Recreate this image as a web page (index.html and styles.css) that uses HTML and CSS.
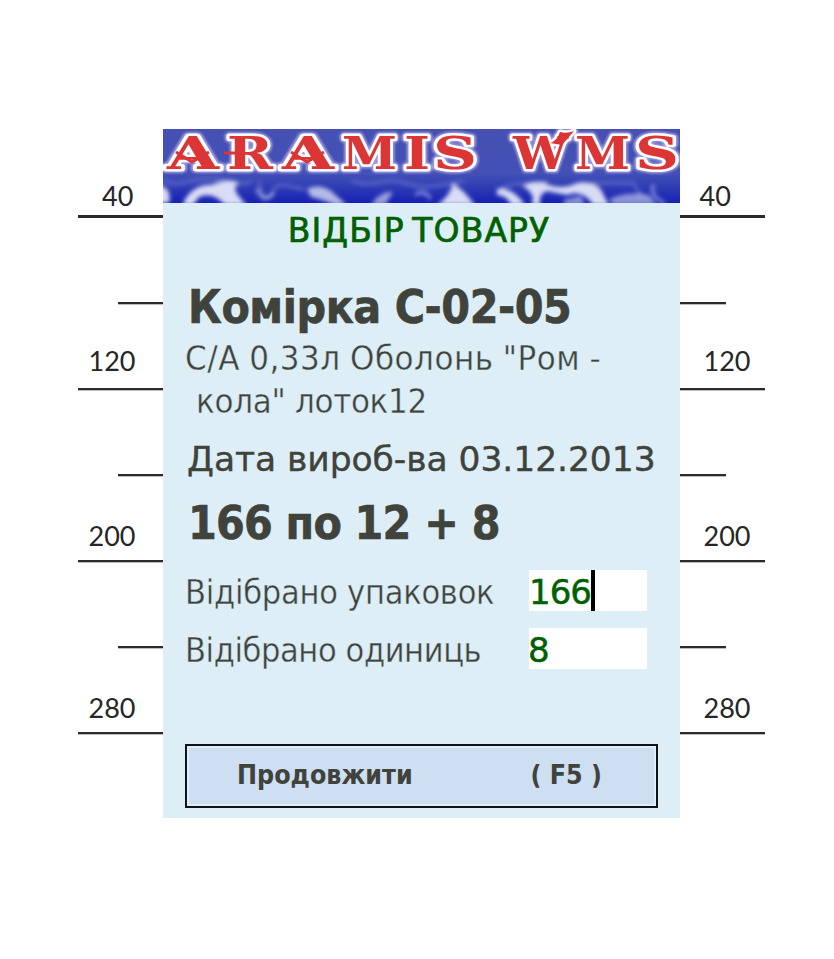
FILE: index.html
```html
<!DOCTYPE html>
<html lang="uk">
<head>
<meta charset="utf-8">
<title>ARAMIS WMS</title>
<link rel="stylesheet" href="styles.css">
</head>
<body>
<main class="stage">
  <div class="axis axis-left">
    <div class="tick major first"><span>40</span></div>
    <div class="tick minor"></div>
    <div class="tick major second"><span>120</span></div>
    <div class="tick minor"></div>
    <div class="tick major"><span>200</span></div>
    <div class="tick minor"></div>
    <div class="tick major"><span>280</span></div>
  </div>

  <section class="screen">
    <svg class="banner" viewBox="0 0 517 74" width="517" height="74">
      <defs>
        <linearGradient id="sky" x1="0" y1="0" x2="0" y2="1">
          <stop offset="0" stop-color="#4650b2"/>
          <stop offset=".6" stop-color="#4350b6"/>
          <stop offset=".8" stop-color="#2c3ab4"/>
          <stop offset="1" stop-color="#1620b4"/>
        </linearGradient>
        <filter id="soft" x="-10%" y="-50%" width="120%" height="200%"><feGaussianBlur stdDeviation="2.3"/></filter>
        <filter id="glow" x="-5%" y="-20%" width="110%" height="140%"><feGaussianBlur stdDeviation="1.2"/></filter>
        <filter id="fine" x="-5%" y="-20%" width="110%" height="140%"><feGaussianBlur stdDeviation=".6"/></filter>
        <g id="letters">
          <text x="4" y="40" textLength="52" lengthAdjust="spacingAndGlyphs">A</text>
          <text x="64" y="40" textLength="46" lengthAdjust="spacingAndGlyphs">R</text>
          <text x="119" y="40" textLength="52" lengthAdjust="spacingAndGlyphs">A</text>
          <text x="179" y="40" textLength="55" lengthAdjust="spacingAndGlyphs">M</text>
          <text x="241" y="40" textLength="26" lengthAdjust="spacingAndGlyphs">I</text>
          <text x="270" y="40" textLength="44" lengthAdjust="spacingAndGlyphs">S</text>
          <text x="350" y="40" textLength="55" lengthAdjust="spacingAndGlyphs">W</text>
          <text x="412" y="40" textLength="55" lengthAdjust="spacingAndGlyphs">M</text>
          <text x="472" y="40" textLength="44" lengthAdjust="spacingAndGlyphs">S</text>
          <path d="M387 14Q394 12 397 3Q404 5 411 2L399 16Z"/>
        </g>
      </defs>
      <rect width="517" height="74" fill="url(#sky)"/>
      <g filter="url(#soft)" fill="none" stroke="#e0e2f6" stroke-linecap="round">
        <path d="M0 51C15 60 28 48 52 50S80 58 88 52M96 52C99 70 106 72 110 62S124 57 140 60M190 52C210 60 222 47 242 54S280 56 300 52M338 60C352 50 372 58 384 52M430 54H470L478 66" stroke="#5c66c8" stroke-width="3"/>
        <g fill="#d8dcf4" stroke="none">
          <path d="M-5 56Q9 58 6 74H-5Z"/>
          <path d="M20 76C22 66 34 55 48 56Q66 49 76 54C68 59 74 66 84 76H62Q50 62 36 68L30 76Z"/>
          <path d="M144 60Q156 54 168 62L184 76H172Q158 70 148 68Z" opacity=".8"/>
          <path d="M208 76Q216 62 230 63L222 76Z" opacity=".65"/>
          <path d="M274 76Q288 66 290 54L302 64L312 76Z"/>
          <path d="M334 60Q350 58 362 76H348Q344 66 334 66Z"/>
          <path d="M360 57Q374 49 386 56Q400 61 414 54Q430 51 438 61L446 76H430Q420 60 404 66L384 62Q374 66 378 76H368Q374 66 360 57Z"/>
          <path d="M400 71L418 67L422 76H402ZM446 70Q464 62 486 66L494 76H450Z" opacity=".6"/>
        </g>
        <path d="M94 61Q100 76 110 65M253 65Q262 61 267 69M490 57Q487 68 501 74" stroke-width="3" opacity=".55"/>
      </g>
      <use href="#letters" class="halo" filter="url(#glow)"/>
      <use href="#letters" class="edge" filter="url(#fine)"/>
      <use href="#letters" class="ink" filter="url(#fine)"/>
      <g class="notch" filter="url(#fine)">
        <path d="M13 23L29 33L46 23M128 23L144 33L161 23"/>
        <path d="M61 24H76"/>
      </g>
    </svg>

    <h1 class="title">ВІДБІР ТОВАРУ</h1>
    <div class="content">
      <h2 class="cell">Комірка С-02-05</h2>
      <div class="product">
        <div class="product-a">С/А 0,33л Оболонь "Ром -</div>
        <div class="product-b">кола" лоток12</div>
      </div>
      <div class="date">Дата вироб-ва 03.12.2013</div>
      <div class="quantity">166 по 12 + 8</div>
      <div class="field">
        <span class="label packs">Відібрано упаковок</span>
        <span class="value">166<i class="caret"></i></span>
      </div>
      <div class="field">
        <span class="label units">Відібрано одиниць</span>
        <span class="value second-value">8</span>
      </div>
      <button class="next"><span>Продовжити</span><span>( F5 )</span></button>
    </div>
  </section>

  <div class="axis axis-right">
    <div class="tick major first"><span>40</span></div>
    <div class="tick minor"></div>
    <div class="tick major second"><span>120</span></div>
    <div class="tick minor"></div>
    <div class="tick major"><span>200</span></div>
    <div class="tick minor"></div>
    <div class="tick major"><span>280</span></div>
  </div>
</main>
</body>
</html>
```
FILE: styles.css
```css
* { box-sizing: border-box; }
body { margin: 0; background: #fff; color: #40423c; }
h1, h2 { margin: 0; }
.stage { display: grid; grid-template-columns: 85px 517px 85px; padding: 129px 0 0 78px; height: 959px; align-items: start; }

.axis { display: flex; flex-direction: column; padding-top: 2px; }
.tick { height: 86px; display: flex; align-items: flex-end; border-bottom: 2px solid #2b2b2b; box-shadow: 0 1px #bbb; }
.tick span { font: 27px/30px Lato, sans-serif; color: #262626; margin-bottom: 9px; }
.tick.first { border-bottom-width: 3px; height: 87px; box-shadow: none; }
.tick.first span { margin-bottom: 4px; }
.tick.second span { margin-bottom: 12px; }
.axis-left .minor { width: 45px; align-self: flex-end; }
.axis-right .minor { width: 46px; }
.axis-left span { margin-left: 10.5px; }
.axis-left .first span { margin-left: 24px; }
.axis-right span { margin-left: 23.5px; }
.axis-right .first span { margin-left: 19.5px; }

.screen { height: 689px; background: #ddeef6; font-family: "DejaVu Sans Condensed", "DejaVu Sans", sans-serif; font-stretch: condensed; white-space: nowrap; }
.banner { display: block; font: bold 44px "DejaVu Serif", serif; }
.halo { fill: #c8bcf0; stroke: #c8bcf0; stroke-width: 8px; stroke-linejoin: round; opacity: .7; }
.edge { fill: #fff; stroke: #fff; stroke-width: 5px; stroke-linejoin: round; }
.ink { fill: #dc3434; }
.notch { fill: none; stroke: #dc3434; stroke-width: 3px; }

.title { margin-top: 7px; text-align: center; font: 33px/41px "DejaVu Sans", sans-serif; height: 40px; letter-spacing: 1.1px; word-spacing: -4px; color: #006000; -webkit-text-stroke: .7px #006000; padding-right: 5px; }
.content { padding: 0 22px; }
.cell, .quantity { font-size: 46px; line-height: 50px; font-weight: bold; -webkit-text-stroke: .6px #40423c; }
.cell { margin-top: 32px; padding-left: 3px; letter-spacing: -.45px; }
.product { margin-top: 4px; padding-top: 1px; font-size: 34.5px; line-height: 43px; -webkit-text-stroke: .35px #ddeef6; }
.product-a { letter-spacing: .5px; word-spacing: -1px; }
.product-b { padding-left: 11px; letter-spacing: -.3px; }
.date { margin-top: 14px; padding-left: 2px; font: 34.5px/44px "DejaVu Sans", sans-serif; letter-spacing: -.05px; -webkit-text-stroke: .4px #40423c; }
.quantity { margin-top: 17px; height: 51px; padding-left: 3px; letter-spacing: -.8px; }
.field { display: flex; height: 41px; margin-top: 17px; padding-right: 11px; font-size: 34px; line-height: 44px; }
.quantity + .field { margin-top: 21px; }
.label { -webkit-text-stroke: .35px #ddeef6; }
.packs { letter-spacing: -.25px; }
.units { letter-spacing: -.4px; }
.value { display: flex; width: 118px; margin-left: auto; background: #fff; color: #006000; font-family: "DejaVu Sans", sans-serif; font-stretch: normal; letter-spacing: -1px; -webkit-text-stroke: .5px #006000; }
.second-value { text-indent: -1px; }
.caret { width: 4px; height: 41px; background: #000; }
.next { display: flex; align-items: center; justify-content: space-between; width: 473px; height: 64px; margin: 75px 0 0; padding: 0 54px 3px 50px; border: 2px solid #101414; background: #cddff0; color: #40423c; font: bold 26.6px "DejaVu Sans Condensed", "DejaVu Sans", sans-serif; font-stretch: condensed; box-shadow: inset 0 0 0 2px #ddf0f8; }
```
